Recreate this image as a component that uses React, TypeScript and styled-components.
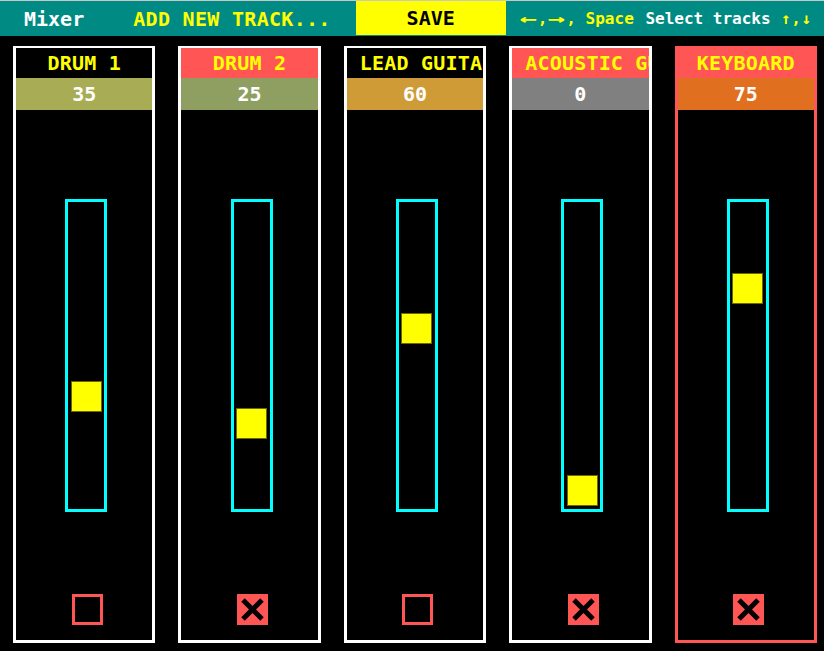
import React from "react";
import styled, { createGlobalStyle } from "styled-components";

const Global = createGlobalStyle`
  html, body { margin: 0; padding: 0; background: #000; }
  body { font-family: "DejaVu Sans Mono", "Liberation Mono", monospace; }
  * { box-sizing: border-box; }
`;

const Page = styled.div`
  width: 824px;
  height: 651px;
  background: #000;
  overflow: hidden;
`;

const TopBar = styled.div`
  height: 36px;
  background: #008a84;
  border-top: 1px solid #c8c8c8;
  display: flex;
  align-items: stretch;
  font-weight: bold;
  font-size: 20px;
`;

const BarText = styled.div<{ $color: string; $ml: number; $ls?: number }>`
  display: flex;
  align-items: center;
  color: ${(p) => p.$color};
  margin-left: ${(p) => p.$ml}px;
  letter-spacing: ${(p) => p.$ls ?? 0}px;
  white-space: nowrap;
`;

const SaveButton = styled.div`
  width: 150px;
  margin-left: 25px;
  margin-bottom: 1px;
  background: #ffff00;
  color: #000;
  display: flex;
  align-items: center;
  justify-content: center;
`;

const Help = styled.div`
  display: flex;
  align-items: center;
  margin-left: 13px;
  font-size: 16px;
  white-space: pre;
`;

const Span = styled.span<{ $color: string; $ml?: number }>`
  color: ${(p) => p.$color};
  margin-left: ${(p) => p.$ml ?? 0}px;
`;

const Arrow = styled.span<{ $w: number; $sx: number }>`
  display: inline-block;
  width: ${(p) => p.$w}px;
  text-align: center;
  transform: scaleX(${(p) => p.$sx});
  color: #ffff00;
`;

const Tracks = styled.div`
  display: grid;
  grid-template-columns: repeat(5, 1fr);
  column-gap: 23px;
  padding: 10px 7px 0 13px;
`;

const Panel = styled.div<{ $selected: boolean }>`
  height: 597px;
  border: 3px solid ${(p) => (p.$selected ? "#ff5555" : "#ffffff")};
  border-top-width: 2px;
  display: flex;
  flex-direction: column;
  align-items: stretch;
  overflow: hidden;
`;

const Title = styled.div<{ $bg: string }>`
  height: 30px;
  line-height: 30px;
  background: ${(p) => p.$bg};
  color: #ffff00;
  font-weight: bold;
  font-size: 20px;
  letter-spacing: 0.2px;
  text-align: center;
  padding: 0 13px;
  white-space: nowrap;
  overflow: hidden;
`;

const Value = styled.div<{ $bg: string }>`
  height: 32px;
  line-height: 32px;
  background: ${(p) => p.$bg};
  color: #ffffff;
  font-weight: bold;
  font-size: 20px;
  text-align: center;
`;

const Track = styled.div`
  position: relative;
  align-self: center;
  margin-left: 4px;
  margin-top: 89px;
  width: 42px;
  height: 313px;
  border: 3px solid #00ffff;
`;

const Thumb = styled.div`
  position: absolute;
  left: 2.5px;
  width: 31px;
  height: 31px;
  background: #ffff00;
  border: 1px solid #6a6a00;
`;

const Check = styled.div<{ $checked: boolean }>`
  align-self: center;
  margin-left: 6px;
  margin-top: 82px;
  width: 31px;
  height: 31px;
  border: ${(p) => (p.$checked ? "none" : "3px solid #ff5555")};
  background: ${(p) => (p.$checked ? "#ff5555" : "transparent")};
  display: flex;
  align-items: center;
  justify-content: center;
`;

type TrackData = {
  name: string;
  value: number;
  titleBg: string;
  valueBg: string;
  checked: boolean;
  selected: boolean;
};

const tracks: TrackData[] = [
  { name: "DRUM 1", value: 35, titleBg: "#000000", valueBg: "#a8ad55", checked: false, selected: false },
  { name: "DRUM 2", value: 25, titleBg: "#ff5555", valueBg: "#8f9f62", checked: true, selected: false },
  { name: "LEAD GUITAR", value: 60, titleBg: "#000000", valueBg: "#cf9b36", checked: false, selected: false },
  { name: "ACOUSTIC GUITAR", value: 0, titleBg: "#ff5555", valueBg: "#808080", checked: true, selected: false },
  { name: "KEYBOARD", value: 75, titleBg: "#ff5555", valueBg: "#e07020", checked: true, selected: true },
];

const Cross = () => (
  <svg width="31" height="31" viewBox="0 0 31 31">
    <line x1="6" y1="6" x2="25" y2="25" stroke="#000" strokeWidth="5" />
    <line x1="25" y1="6" x2="6" y2="25" stroke="#000" strokeWidth="5" />
  </svg>
);

export default function App() {
  return (
    <Page>
      <Global />
      <TopBar>
        <BarText $color="#ffffff" $ml={24}>Mixer</BarText>
        <BarText $color="#ffff00" $ml={49} $ls={0.3}>ADD NEW TRACK...</BarText>
        <SaveButton>SAVE</SaveButton>
        <Help>
          <Arrow $w={19} $sx={1.8}>←</Arrow>
          <Span $color="#ffff00">,</Span>
          <Arrow $w={19} $sx={1.8}>→</Arrow>
          <Span $color="#ffff00">, Space</Span>
          <Span $color="#ffffff" $ml={2}> Select tracks </Span>
          <Arrow $w={11} $sx={1}>↑</Arrow>
          <Span $color="#ffff00">,</Span>
          <Arrow $w={11} $sx={1}>↓</Arrow>
        </Help>
      </TopBar>
      <Tracks>
        {tracks.map((t) => (
          <Panel key={t.name} $selected={t.selected}>
            <Title $bg={t.titleBg}>{t.name}</Title>
            <Value $bg={t.valueBg}>{t.value}</Value>
            <Track>
              <Thumb style={{ top: 3 + (100 - t.value) * 2.7 }} />
            </Track>
            <Check $checked={t.checked}>{t.checked && <Cross />}</Check>
          </Panel>
        ))}
      </Tracks>
    </Page>
  );
}
